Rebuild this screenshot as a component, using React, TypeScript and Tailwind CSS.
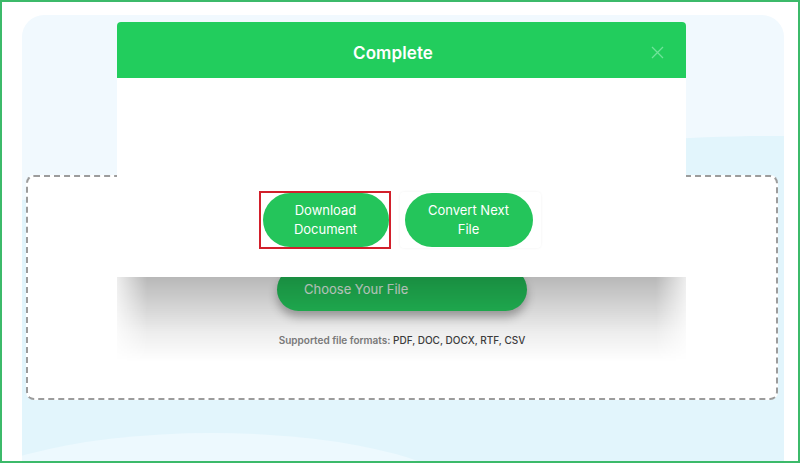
import React from "react";

export default function App() {
  return (
    <div
      className="relative w-[800px] h-[463px] overflow-hidden bg-white border-2 border-[#3cba6a] pl-[20px] pr-[14px] pt-[13px]"
      style={{ fontFamily: "Inter, 'Noto Sans', sans-serif" }}
    >
      {/* background card */}
      <div className="relative h-[470px] rounded-t-[22px] bg-[#f1f9fe] overflow-hidden pt-[160px] pl-[4px] pr-[6px]">
        <svg
          className="absolute inset-0"
          width="762"
          height="470"
          viewBox="0 0 762 470"
        >
          <path
            d="M0 185 C 260 170, 560 118, 762 121 L 762 470 L 0 470 Z"
            fill="#e2f5fc"
          />
          <ellipse cx="190" cy="490" rx="260" ry="72" fill="#edf9fe" />
        </svg>

        {/* dashed upload area */}
        <div className="relative h-[225px] rounded-[8px] border-2 border-dashed border-[#9c9c9c] bg-white flex flex-col items-center pt-[91px]">
          <button className="w-[250px] h-[43px] rounded-[22px] bg-[#24c55b] text-left pl-[27px] text-[13px] text-white/90 shadow-[0_6px_10px_rgba(0,0,0,0.3)]">
            Choose Your File
          </button>
          <p className="mt-[22px] text-[10px] font-semibold text-[#808080]">
            Supported file formats:{" "}
            <span className="text-[#3f3f3f] font-medium">
              PDF, DOC, DOCX, RTF, CSV
            </span>
          </p>
        </div>
      </div>

      {/* modal shadow */}
      <div className="absolute left-[115px] top-[275px] w-[569px] h-[90px] bg-[linear-gradient(to_bottom,rgba(0,0,0,0.28),rgba(0,0,0,0.17)_30px,rgba(0,0,0,0.07)_55px,rgba(0,0,0,0)_85px)] [mask-image:linear-gradient(to_right,rgba(0,0,0,0.25),black_30px,black_calc(100%-30px),rgba(0,0,0,0.25))]" />

      {/* modal */}
      <div className="absolute left-[115px] top-[20px] w-[569px] h-[255px] bg-white rounded-t-[4px] flex flex-col">
        <div className="relative h-[56px] bg-[#22cd5d] rounded-t-[4px] flex items-center justify-center pr-[17px] pt-[7px]">
          <span className="text-white text-[17px] font-semibold tracking-[0.1px]">
            Complete
          </span>
          <svg
            className="absolute right-[22px] top-[24px]"
            width="13"
            height="13"
            viewBox="0 0 13 13"
          >
            <path
              d="M1 1 L12 12 M12 1 L1 12"
              stroke="#6fe39a"
              strokeWidth="1.3"
              fill="none"
            />
          </svg>
        </div>
        <div className="flex justify-center items-start pt-[113px] pr-[4px]">
          <div className="w-[132px] h-[58px] border-2 border-[#d21f2b] pl-[2px]">
            <button className="w-[126px] h-[54px] rounded-full bg-[#24c55b] text-white text-[13px] leading-[19px]">
              Download
              <br />
              Document
            </button>
          </div>
          <div className="ml-[9px] mt-[1px] w-[141px] h-[56px] pl-[5px] pt-[1px] rounded-[4px] shadow-[0_0_3px_rgba(0,0,0,0.06)]">
            <button className="w-[128px] h-[54px] rounded-full bg-[#24c55b] text-white text-[13px] leading-[19px]">
              Convert Next
              <br />
              File
            </button>
          </div>
        </div>
      </div>
    </div>
  );
}
